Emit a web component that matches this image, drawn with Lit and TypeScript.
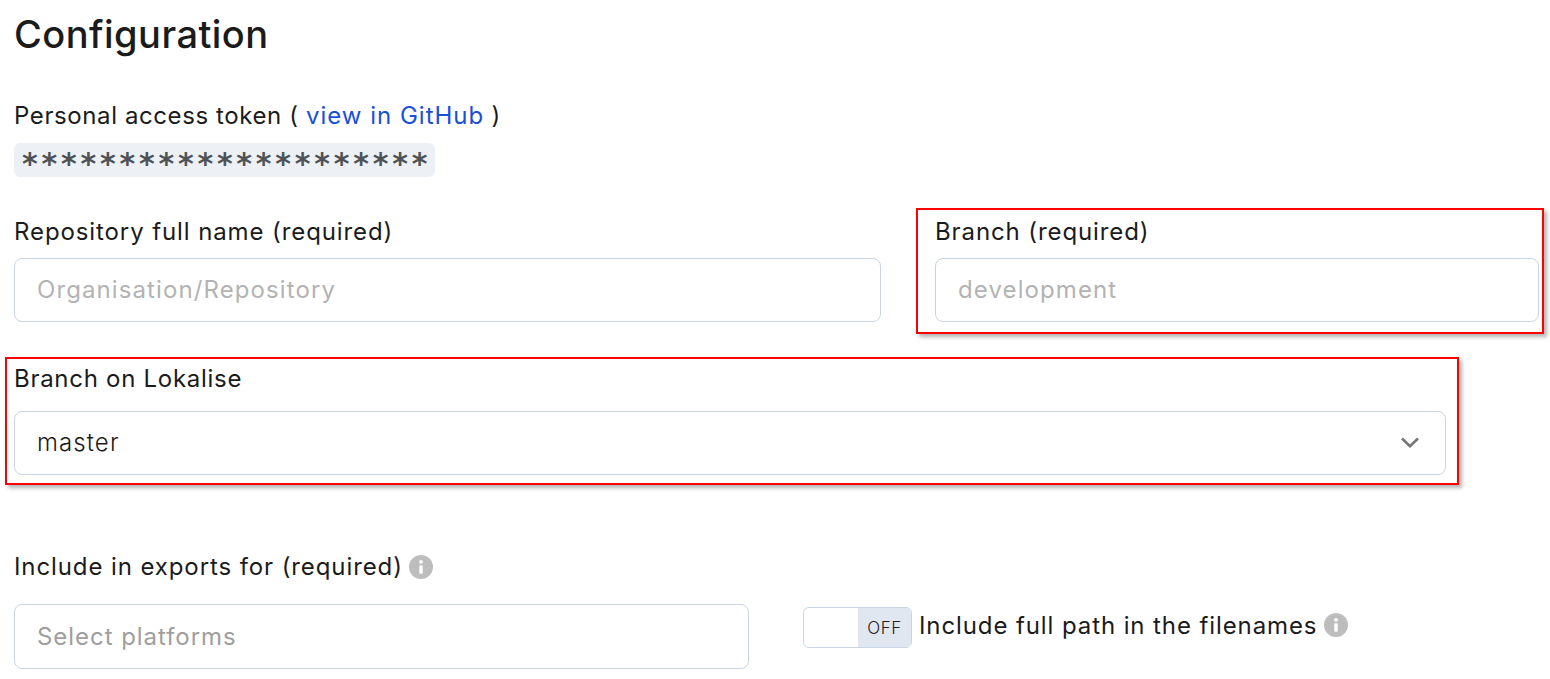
import { LitElement, html, css } from "lit";
import { customElement } from "lit/decorators.js";

const info = html`<svg class="info" viewBox="0 0 24 24" aria-hidden="true"><circle cx="12" cy="12" r="12" fill="#bdbdbd"/><circle cx="12" cy="6.8" r="1.9" fill="#fff"/><rect x="10.3" y="10.2" width="3.4" height="8.6" rx="0.8" fill="#fff"/></svg>`;

@customElement("app-root")
export class AppRoot extends LitElement {
  static styles = css`
    :host {
      display: block;
      position: relative;
      width: 1550px;
      height: 679px;
      overflow: hidden;
      background: #fff;
      color: #1b1b1b;
      font-family: Inter, "Liberation Sans", sans-serif;
      font-size: 24px;
      letter-spacing: 0.9px;
      box-sizing: border-box;
    }
    .page {
      display: flex;
      flex-direction: column;
      padding: 12px 0 0 14px;
    }
    h1 {
      margin: 0;
      font-size: 38px;
      line-height: 44px;
      font-weight: 500;
      letter-spacing: 0.46px;
    }
    .label {
      display: flex;
      align-items: center;
      gap: 6px;
      height: 30px;
      line-height: 30px;
      white-space: nowrap;
    }
    .token-label { margin-top: 45px; display: block; letter-spacing: 0.6px; }
    a { color: #1a4fd8; text-decoration: none; letter-spacing: 1px; }
    .token {
      align-self: flex-start;
      margin-top: 12px;
      width: 421px;
      height: 34px;
      box-sizing: border-box;
      padding-left: 8px;
      background: #edf1f6;
      border-radius: 6px;
      color: #4f5357;
      font-family: "DejaVu Sans", sans-serif;
      font-size: 30px;
      font-weight: 700;
      letter-spacing: 3.8px;
      line-height: 42px;
      white-space: nowrap;
    }
    .row {
      display: flex;
      gap: 54px;
      margin-top: 40px;
    }
    .field { display: flex; flex-direction: column; }
    .gap-11 { gap: 11px; }
    .repo { width: 867px; }
    .branch { width: 604px; }
    .box {
      box-sizing: border-box;
      height: 64px;
      display: flex;
      align-items: center;
      justify-content: space-between;
      padding: 0 22px 2px;
      border: 1px solid #c9d5e3;
      border-radius: 8px;
      white-space: nowrap;
    }
    .ph { color: #b3b3b3; letter-spacing: 1.1px; }
    .lok {
      width: 1432px;
      margin-top: 42px;
      gap: 17px;
    }
    .lok .label { letter-spacing: 0.72px; }
    .lok .box { padding-right: 26px; }
    .master { font-weight: 300; letter-spacing: 1.1px; }
    .chev { width: 18px; height: 11px; }
    .exports { margin-top: 77px; gap: 22px; }
    .bottom { display: flex; align-items: flex-start; gap: 54px; }
    .platforms { width: 735px; height: 65px; padding-bottom: 0; }
    .platforms .ph { color: #9e9e9e; letter-spacing: 0.95px; }
    .toggle-row {
      display: flex;
      align-items: center;
      gap: 7px;
      margin-top: 3px;
    }
    .toggle {
      box-sizing: border-box;
      width: 109px;
      height: 41px;
      display: flex;
      justify-content: flex-end;
      border: 1px solid #c9d5e3;
      border-radius: 6px;
      overflow: hidden;
    }
    .off {
      width: 53px;
      background: #e1e7f0;
      display: flex;
      align-items: center;
      justify-content: center;
      font-size: 17px;
      font-weight: 300;
      letter-spacing: 0.5px;
      color: #222;
    }
    .toggle-label { display: flex; align-items: center; gap: 7px; margin-top: -5px; white-space: nowrap; }
    .info { width: 24px; height: 24px; flex: none; }
    .mark {
      position: absolute;
      box-sizing: border-box;
      border: 2px solid #f00;
      box-shadow: 3px 3px 4px rgba(0, 0, 0, 0.3);
      pointer-events: none;
    }
    .m1 { left: 916px; top: 208px; width: 628px; height: 126px; }
    .m2 { left: 5px; top: 357px; width: 1454px; height: 128px; }
  `;

  render() {
    return html`
      <div class="page">
        <h1>Configuration</h1>
        <div class="label token-label">Personal access token ( <a href="#">view in GitHub</a> )</div>
        <div class="token">*********************</div>
        <div class="row">
          <div class="field gap-11 repo">
            <div class="label">Repository full name (required)</div>
            <div class="box"><span class="ph">Organisation/Repository</span></div>
          </div>
          <div class="field gap-11 branch">
            <div class="label">Branch (required)</div>
            <div class="box"><span class="ph">development</span></div>
          </div>
        </div>
        <div class="field lok">
          <div class="label">Branch on Lokalise</div>
          <div class="box">
            <span class="master">master</span>
            <svg class="chev" viewBox="0 0 18 11" aria-hidden="true"><path d="M1 1.5 9 9.2l8-7.7" fill="none" stroke="#777" stroke-width="2.6"/></svg>
          </div>
        </div>
        <div class="field exports">
          <div class="label">Include in exports for (required) ${info}</div>
          <div class="bottom">
            <div class="box platforms"><span class="ph">Select platforms</span></div>
            <div class="toggle-row">
              <div class="toggle"><span class="off">OFF</span></div>
              <div class="toggle-label">Include full path in the filenames ${info}</div>
            </div>
          </div>
        </div>
      </div>
      <div class="mark m1"></div>
      <div class="mark m2"></div>
    `;
  }
}
